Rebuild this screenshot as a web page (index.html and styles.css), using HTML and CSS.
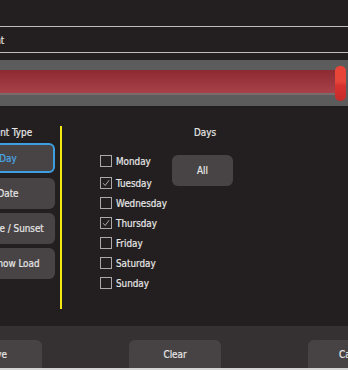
FILE: index.html
```html
<!DOCTYPE html>
<html>
<head>
<meta charset="utf-8">
<link rel="stylesheet" href="styles.css">
</head>
<body>
<div class="screen">
  <div class="top"></div>
  <div class="name-row"><span class="name">Event</span></div>
  <div class="gap"></div>
  <div class="slider">
    <div class="fill"></div>
    <div class="handle"></div>
    <div class="rest"></div>
  </div>
  <div class="main">
    <div class="type-col">
      <div class="title">Event Type</div>
      <button class="btn selected">Day</button>
      <button class="btn">Date</button>
      <button class="btn">Sunrise / Sunset</button>
      <button class="btn">On Show Load</button>
    </div>
    <div class="divider"></div>
    <div class="checklist">
      <label class="row first"><span class="box"></span>Monday</label>
      <label class="row"><span class="box"><svg viewBox="0 0 12 12"><path d="M2.5 6.2 L5 9 L9.8 2.6"/></svg></span>Tuesday</label>
      <label class="row"><span class="box"></span>Wednesday</label>
      <label class="row"><span class="box"><svg viewBox="0 0 12 12"><path d="M2.5 6.2 L5 9 L9.8 2.6"/></svg></span>Thursday</label>
      <label class="row"><span class="box"></span>Friday</label>
      <label class="row"><span class="box"></span>Saturday</label>
      <label class="row"><span class="box"></span>Sunday</label>
    </div>
    <div class="all-col">
      <div class="title days">Days</div>
      <button class="btn all">All</button>
    </div>
  </div>
  <div class="bottom">
    <button class="btn foot save">Save</button>
    <button class="btn foot">Clear</button>
    <button class="btn foot">Cancel</button>
  </div>
  <div class="strip"></div>
</div>
</body>
</html>
```

FILE: styles.css
```css
html, body {
  margin: 0;
  padding: 0;
  background: #231f20;
}
body {
  width: 348px;
  height: 370px;
  overflow: hidden;
  font-family: "DejaVu Sans Condensed", "DejaVu Sans", sans-serif;
  font-size: 9.8px;
  color: #e6e6e6;
  -webkit-text-stroke: 0.2px currentColor;
}
.screen {
  display: flex;
  flex-direction: column;
  width: 348px;
  height: 370px;
  overflow: hidden;
}
.screen > * {
  flex: none;
}
.top {
  height: 26px;
  border-bottom: 1px solid #bdbdbd;
}
.name-row {
  height: 25px;
  border-bottom: 1px solid #bdbdbd;
  display: flex;
  align-items: center;
  white-space: nowrap;
}
.name {
  margin-left: -21px;
  margin-top: 2px;
}
.gap {
  height: 7px;
}
.slider {
  height: 46px;
  background: #5c5c5c;
  display: flex;
  align-items: center;
}
.fill {
  flex: 1;
  height: 23px;
  margin-top: -1px;
  background: linear-gradient(#8d2a31, #a8414a);
  border-bottom: 2px solid #7a6a6b;
}
.handle {
  width: 11px;
  height: 35px;
  border-radius: 5px;
  background: linear-gradient(#ea4336 0%, #e5463a 45%, #d8322f 55%, #c42a2a 100%);
}
.rest {
  width: 2px;
}
.main {
  height: 200px;
  padding-top: 20px;
  display: flex;
  margin-left: -39px;
}
.title {
  height: 14px;
  line-height: 14px;
  text-align: center;
  white-space: nowrap;
}
.type-col {
  width: 94px;
  display: flex;
  flex-direction: column;
}
.type-col .title {
  margin-bottom: 3px;
}
.btn {
  display: block;
  box-sizing: border-box;
  height: 31px;
  border: none;
  border-radius: 6px;
  background: #484445;
  color: #e6e6e6;
  font: inherit;
  padding: 0;
  white-space: nowrap;
  text-align: center;
}
.type-col .btn {
  width: 94px;
  margin-bottom: 4px;
}
.type-col .btn.selected {
  border: 2px solid #3d9fe2;
  color: #49a8e6;
  height: 30px;
  margin-bottom: 5px;
}
.divider {
  width: 2px;
  height: 183px;
  margin-left: 5px;
  background: #f2ea10;
}
.checklist {
  margin-left: 38px;
  padding-top: 25px;
  width: 72px;
  display: flex;
  flex-direction: column;
}
.row {
  height: 20px;
  display: flex;
  align-items: center;
  white-space: nowrap;
}
.row.first {
  margin-bottom: 2px;
}
.box {
  box-sizing: border-box;
  width: 12px;
  height: 12px;
  border: 1px solid #a9a9a9;
  margin-right: 4px;
  flex: none;
  display: flex;
}
.box svg {
  width: 10px;
  height: 10px;
}
.box path {
  fill: none;
  stroke: #b4b4b4;
  stroke-width: 1.1;
}
.all-col {
  width: 61px;
  display: flex;
  flex-direction: column;
}
.all-col .days {
  padding-left: 5px;
}
.btn.all {
  width: 61px;
  margin-top: 15px;
}
.bottom {
  height: 28px;
  background: #353132;
  display: flex;
  padding-top: 14px;
  gap: 87px;
}
.btn.foot {
  width: 92px;
  height: 28px;
  flex: none;
  border-radius: 6px 6px 0 0;
  background: #474344;
}
.btn.save {
  margin-left: -50px;
}
.strip {
  height: 2px;
  background: #d6d6d6;
}
```
